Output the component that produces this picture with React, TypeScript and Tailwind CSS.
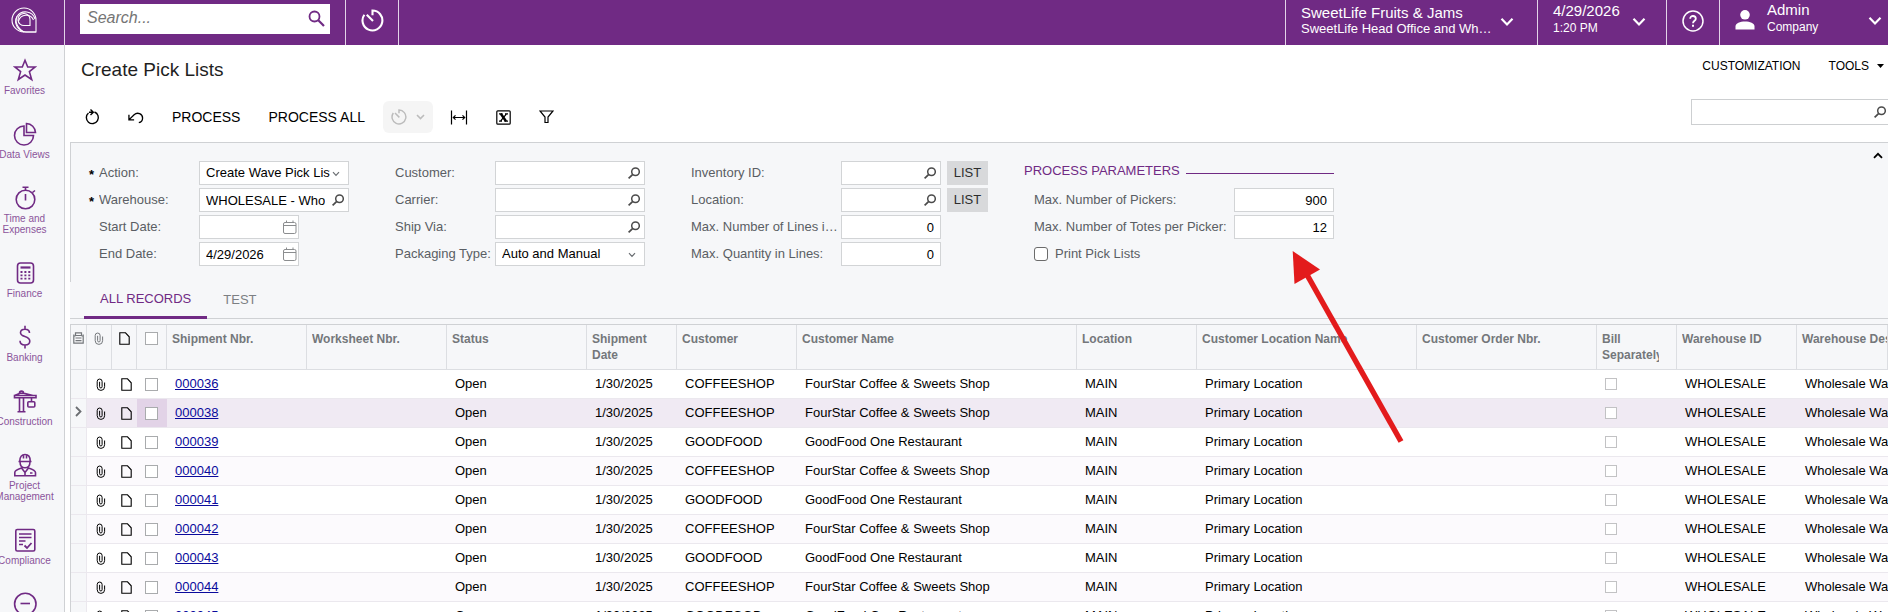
import React from 'react';
import clsx from 'clsx';

type IconProps = { className?: string };

const Svg: React.FC<React.SVGProps<SVGSVGElement>> = ({ children, ...rest }) => (
    <svg fill="none" stroke="currentColor" strokeWidth="1.5" aria-hidden="true" {...rest}>
        {children}
    </svg>
);

const LookupIcon = ({ className }: IconProps) => (
    <Svg className={className} width="12" height="12" viewBox="0 0 12 12">
        <circle cx="7.5" cy="4.7" r="3.8" />
        <path d="M4.8 7.4 0.6 11.4" strokeWidth="1.7" />
    </Svg>
);

const CalendarIcon = ({ className }: IconProps) => (
    <Svg className={className} width="14" height="14" viewBox="0 0 14 14" strokeWidth="1">
        <rect x="0.5" y="2.5" width="12.5" height="11" rx="1.5" />
        <path d="M0.5 5.5H13M3.5 0.5V3M10 0.5V3" />
    </Svg>
);

const SmallChevron = ({ className }: IconProps) => (
    <Svg className={className} width="8" height="6" viewBox="0 0 8 6" strokeWidth="1.2">
        <path d="M1 1.2 4 4.4 7 1.2" />
    </Svg>
);

const HeaderChevron = ({ className }: IconProps) => (
    <Svg className={className} width="14" height="10" viewBox="0 0 14 10" strokeWidth="2.2">
        <path d="M1.5 1.8 7 7.4 12.5 1.8" />
    </Svg>
);

const TimerIcon = ({ size, width = 2 }: { size: number; width?: number }) => (
    <Svg width={size} height={size} viewBox="0 0 22 22" strokeWidth={width}>
        <path d="M11 6V1.5A9.5 9.5 0 1 1 3.2 5.5" />
        <path d="M5.5 5.5 11.5 11.5" />
    </Svg>
);

const ClipIcon = () => (
    <Svg width="10" height="13" viewBox="0 0 10 13" strokeWidth="1">
        <path d="M1.2 3.5V8.7a3.7 3.7 0 0 0 7.4 0V4.5M1.2 3.5a2.4 2.4 0 0 1 4.9 0V8.7a1.2 1.2 0 0 1-2.5 0V3.8" />
    </Svg>
);

const NoteIcon = () => (
    <Svg width="11" height="13" viewBox="0 0 11 13" strokeWidth="1.1">
        <path d="M0.8 0.8H6.5L10.2 4.8V12.2H0.8Z" />
    </Svg>
);

const Logo = () => (
    <Svg width="26" height="26" viewBox="0 0 26 26" strokeWidth="1.1">
        <path d="M25 25H13A12 12 0 1 1 25 13Z" />
        <path d="M25 25H15A10.5 10.5 0 0 1 6 9.5 10 10 0 0 1 24 12" />
        <path d="M19 18.500H13.500A6 6 0 1 1 19 12.500Z" />
        <path d="M6 9.500C3.500 14 6 21 13 25M7.500 14a8 8 0 0 1 15-1" />
    </Svg>
);

const navItems: { lines: string[]; icon: React.ReactNode }[] = [
    {
        lines: ['Favorites'],
        icon: <path d="M12 2.300 14.700 9H22.200L16.400 13.600 18.700 21.500 12 17 5.300 21.500 7.600 13.600 1.800 9H9.300Z" />,
    },
    {
        lines: ['Data Views'],
        icon: (
            <>
                <path d="M11 4A9.500 9.500 0 1 0 20.500 13.500H11Z" />
                <path d="M13.500 1.500A9.500 9.500 0 0 1 22.500 10.500H13.500Z" />
            </>
        ),
    },
    {
        lines: ['Time and', 'Expenses'],
        icon: (
            <>
                <circle cx="12.500" cy="13.500" r="9.300" />
                <path d="M12.500 8V14.500M12.500 4V1.500M9.500 1.200H15.500M19.500 6.500 22 4.500" />
            </>
        ),
    },
    {
        lines: ['Finance'],
        icon: (
            <>
                <rect x="4.500" y="2" width="16" height="20" rx="3" />
                <path d="M7.500 6.500H17.500" strokeWidth="2.200" />
                <path d="M7.500 11H18M7.500 14.300H18M7.500 17.600H18" strokeWidth="1.800" strokeDasharray="2 1.900" />
            </>
        ),
    },
    {
        lines: ['Banking'],
        icon: (
            <path d="M16.500 8C16.500 5.500 14.500 4.200 12 4.200S7.500 5.500 7.500 7.700C7.500 12.500 16.800 10.500 16.800 16 16.800 18.500 14.800 20 12 20S7 18.500 7 15.800M12 0.800V4.200M12 20V23.500" />
        ),
    },
    {
        lines: ['Construction'],
        icon: (
            <>
                <path d="M1.500 6.500H23V8.800H1.500ZM1.500 6.500 7 4.200H11L20 6.500M6.500 4C6.500 1.500 10.500 1.500 10.500 4" />
                <path d="M6.500 9V22.500M10.500 9V22.500M4.500 22.800H12.500M18.500 9V12.500" />
                <rect x="14.800" y="12.800" width="7" height="5.200" rx="1" />
            </>
        ),
    },
    {
        lines: ['Project', 'Management'],
        icon: (
            <>
                <path d="M5.500 8.500H18.500M6.800 8C6.800 4 8.800 1.500 12 1.500S17.200 4 17.200 8M10.500 2V5.500M13.500 2V5.500" />
                <path d="M7 8.500C7 12.500 9.200 14.800 12 14.800S17 12.500 17 8.500" />
                <path d="M1.800 22.800V19.500C1.800 17.500 4 16.500 8.500 15L12 19.500 15.500 15C20 16.500 22.500 17.500 22.500 19.500V22.800ZM12 19.500V22.500M17 20H19.500" />
            </>
        ),
    },
    {
        lines: ['Compliance'],
        icon: (
            <>
                <rect x="2.800" y="1.500" width="19" height="21.500" rx="1.500" />
                <path d="M6 6H18.500M6 9.500H18.500M6 13H12.500M6 16.500H10" />
                <path d="M11.500 17.500 14 20 18.500 15" strokeWidth="1.800" />
            </>
        ),
    },
    {
        lines: ['More Items'],
        icon: (
            <>
                <circle cx="12.300" cy="12" r="10.700" />
                <path d="M7.500 11.500H17" />
            </>
        ),
    },
];

const control = 'h-6 border border-[#d2d4d6] bg-white text-[13px] text-black outline-none';

interface FieldProps {
    id: string;
    label: string;
    labelWidth: string;
    width?: string;
    value?: string;
    kind?: 'lookup' | 'date' | 'select' | 'number';
    required?: boolean;
    children?: React.ReactNode;
}

const Field = ({ id, label, labelWidth, width = 'w-[150px]', value = '', kind = 'lookup', required, children }: FieldProps) => (
    <div className="flex h-6 items-center">
        {required !== undefined && <span className="w-[10px] pt-1 text-[13px] font-bold text-black">{required ? '*' : ''}</span>}
        <label htmlFor={id} className={clsx('shrink-0 truncate text-[13px] text-[#5a5e64]', labelWidth)}>
            {label}
        </label>
        <div className={clsx('relative', width)}>
            {kind === 'select' ? (
                <select id={id} className={clsx(control, 'block w-full appearance-none pr-[18px] pl-[6px]')}>
                    <option>{value}</option>
                </select>
            ) : (
                <input
                    id={id}
                    type="text"
                    defaultValue={value}
                    className={clsx(control, 'block w-full pl-[6px]', kind === 'number' ? 'pr-[6px] text-right' : 'pr-[23px]')}
                />
            )}
            {kind === 'select' && <SmallChevron className="pointer-events-none absolute top-[10px] right-[9px] text-[#6b6f73]" />}
            {kind === 'lookup' && <LookupIcon className="pointer-events-none absolute top-[6px] right-[5px] text-[#4b4b4b]" />}
            {kind === 'date' && <CalendarIcon className="pointer-events-none absolute top-[5px] right-[2px] text-[#8b8d8f]" />}
        </div>
        {children}
    </div>
);

const ListButton = () => (
    <button className="ml-[6px] h-6 w-[41px] bg-[#d8d9db] text-[13px] text-[#2d2d2d]">LIST</button>
);

const columns: { title: string; width: string }[] = [
    { title: 'Shipment Nbr.', width: 'w-[140px]' },
    { title: 'Worksheet Nbr.', width: 'w-[140px]' },
    { title: 'Status', width: 'w-[140px]' },
    { title: 'Shipment Date', width: 'w-[90px]' },
    { title: 'Customer', width: 'w-[120px]' },
    { title: 'Customer Name', width: 'w-[280px]' },
    { title: 'Location', width: 'w-[120px]' },
    { title: 'Customer Location Name', width: 'w-[220px]' },
    { title: 'Customer Order Nbr.', width: 'w-[180px]' },
    { title: 'Bill Separately', width: 'w-[80px]' },
    { title: 'Warehouse ID', width: 'w-[120px]' },
];

const customers: Record<string, string> = {
    COFFEESHOP: 'FourStar Coffee & Sweets Shop',
    GOODFOOD: 'GoodFood One Restaurant',
};

const shipments = [
    { nbr: '000036', customer: 'COFFEESHOP' },
    { nbr: '000038', customer: 'COFFEESHOP' },
    { nbr: '000039', customer: 'GOODFOOD' },
    { nbr: '000040', customer: 'COFFEESHOP' },
    { nbr: '000041', customer: 'GOODFOOD' },
    { nbr: '000042', customer: 'COFFEESHOP' },
    { nbr: '000043', customer: 'GOODFOOD' },
    { nbr: '000044', customer: 'COFFEESHOP' },
    { nbr: '000045', customer: 'GOODFOOD' },
];

const selected = '000038';

const th = 'h-[45px] border-b border-r border-[#dcdee2] p-0 align-top';
const box = 'block appearance-none border bg-white';

const Header = () => (
    <header className="flex h-[45px] shrink-0 bg-[#702a84] text-white">
        <a href="#home" aria-label="Home" className="flex w-[65px] items-start border-r border-[#e3d3e8] pt-[7px] pl-[11px]">
            <Logo />
        </a>
        <div className="flex w-[281px] items-start border-r border-[#e3d3e8] pt-1 pl-[15px]">
            <div className="relative h-[30px] w-[250px] bg-white">
                <input
                    type="text"
                    aria-label="Search"
                    placeholder="Search..."
                    className="h-[28px] w-full bg-transparent pl-[7px] text-base text-black italic outline-none placeholder:text-[#757575]"
                />
                <Svg className="pointer-events-none absolute top-[6px] right-[5px] text-[#702a84]" width="17" height="17" viewBox="0 0 17 17" strokeWidth="1.800">
                    <circle cx="6.500" cy="6.500" r="5" />
                    <path d="M10.300 10.300 16 16" strokeWidth="2.200" />
                </Svg>
            </div>
        </div>
        <button aria-label="Recent" className="flex w-[53px] items-start justify-center border-r border-[#e3d3e8] pt-[9px]">
            <TimerIcon size={23} />
        </button>
        <div className="ml-auto flex">
            <button className="flex w-[252px] items-start border-l border-[#e3d3e8] pl-[15px] text-left">
                <span className="w-[195px] pt-1">
                    <span className="block truncate text-[15px] leading-[17px]">SweetLife Fruits &amp; Jams</span>
                    <span className="block truncate text-[13px] leading-[15px]">SweetLife Head Office and Wholesale Center</span>
                </span>
                <HeaderChevron className="mt-[17px] ml-1" />
            </button>
            <button className="flex w-[129px] items-start border-l border-[#e3d3e8] pl-[15px] text-left">
                <span className="w-[71px] pt-[2px]">
                    <span className="block text-[15px] leading-[18px]">4/29/2026</span>
                    <span className="block text-xs leading-[17px]">1:20 PM</span>
                </span>
                <HeaderChevron className="mt-[17px] ml-2" />
            </button>
            <button aria-label="Help" className="flex w-[53px] items-start justify-center border-l border-[#e3d3e8] pt-[10px]">
                <Svg width="22" height="22" viewBox="0 0 22 22" strokeWidth="1.500">
                    <circle cx="11" cy="11" r="10" />
                    <path d="M8.200 8.800C8.200 5 13.800 5.200 13.800 8.700 13.800 10.800 11 10.800 11 13.300" strokeWidth="1.800" />
                    <path d="M11 14.800V16.800" strokeWidth="2" />
                </Svg>
            </button>
            <button className="flex w-[169px] items-start border-l border-[#e3d3e8] pl-[15px] text-left">
                <svg className="mt-[10px]" width="20" height="20" viewBox="0 0 20 20" fill="currentColor" aria-hidden="true">
                    <circle cx="10" cy="4.800" r="4.800" />
                    <path d="M0.500 19.500V16.500C0.500 13 5 11.500 10 11.500S19.500 13 19.500 16.500V19.500Z" />
                </svg>
                <span className="ml-3 w-[93px] pt-[1px]">
                    <span className="block text-[15px] leading-[18px]">Admin</span>
                    <span className="block text-xs leading-[17px]">Company</span>
                </span>
                <HeaderChevron className="mt-[16px] ml-2" />
            </button>
        </div>
    </header>
);

const Sidebar = () => (
    <nav className="w-[65px] shrink-0 border-r border-[#cfd1d4] bg-[#f6f7f9] pt-[13px]">
        <ul className="flex w-[49px] flex-col gap-[26px]">
            {navItems.map(item => (
                <li key={item.lines[0]}>
                    <a href="#nav" className="flex flex-col items-center text-[#702a84]">
                        <Svg width="24" height="24" viewBox="0 0 24 24" strokeWidth="1.600">
                            {item.icon}
                        </Svg>
                        <span className="flex flex-col items-center pt-[3px] text-[10px] leading-[11px] whitespace-nowrap opacity-80">
                            {item.lines.map(line => (
                                <span key={line}>{line}</span>
                            ))}
                        </span>
                    </a>
                </li>
            ))}
        </ul>
    </nav>
);

const TitleBar = () => (
    <div className="flex h-[50px] items-center justify-between pl-4">
        <h1 className="text-[19px] text-[#1f1f1f]">Create Pick Lists</h1>
        <div className="flex h-[42px] items-center self-start text-xs text-black">
            <button>CUSTOMIZATION</button>
            <button className="ml-7 flex items-center pr-1">
                TOOLS
                <svg className="ml-2" width="7" height="4" viewBox="0 0 7 4" aria-hidden="true">
                    <path d="M0 0H7L3.500 4Z" />
                </svg>
            </button>
        </div>
    </div>
);

const Toolbar = () => (
    <div className="flex h-[47px] items-start text-sm text-black">
        <div className="flex h-[44px] items-center">
            <button aria-label="Refresh" className="ml-5">
                <Svg width="15" height="16" viewBox="0 0 15 16" strokeWidth="1.400">
                    <path d="M3.500 4A6 6 0 1 0 9.500 3M4 3.300H8.200M5.500 0.600 8.300 3.300 5.500 6" />
                </Svg>
            </button>
            <button aria-label="Cancel" className="ml-7">
                <Svg width="16" height="13" viewBox="0 0 17 13" strokeWidth="1.400">
                    <path d="M1 3.500V9H6.500M1.500 8.500 6.500 3.500C10 0.500 15.500 2.500 15.500 7 15.500 9.500 14 11.500 11.500 12" />
                </Svg>
            </button>
            <button className="ml-7">PROCESS</button>
            <button className="ml-7">PROCESS ALL</button>
            <button aria-label="Schedule" disabled className="ml-[18px] flex h-8 w-[50px] items-center justify-center gap-[9px] rounded-md bg-[#f5f5f5] text-[#bcbcbc]">
                <TimerIcon size={16} />
                <Svg width="9" height="6" viewBox="0 0 9 6" strokeWidth="1.600">
                    <path d="M1 1 4.500 4.500 8 1" />
                </Svg>
            </button>
            <button aria-label="Fit to screen" className="ml-[17px]">
                <Svg width="18" height="15" viewBox="0 0 18 15" strokeWidth="1.200">
                    <path d="M1.500 0.500V14.500M16.500 0.500V14.500M3 7.500H15M5.500 5.300 3.300 7.500 5.500 9.700M12.500 5.300 14.700 7.500 12.500 9.700" />
                </Svg>
            </button>
            <button aria-label="Export to Excel" className="ml-7">
                <Svg width="15" height="15" viewBox="0 0 15 15" strokeWidth="1.200">
                    <rect x="0.800" y="0.800" width="13.400" height="13.400" rx="1" />
                    <path d="M4.800 3.800 10 11.200" strokeWidth="2.400" />
                    <path d="M10.500 3.800 4.500 11.200M3 3.800H6.500M9 3.800H12M3 11.200H6M8.500 11.200H12" />
                </Svg>
            </button>
            <button aria-label="Filter" className="ml-7">
                <Svg width="15" height="14" viewBox="0 0 15 14" strokeWidth="1.200">
                    <path d="M1 1H14L9 7V12.500H6V7Z" />
                </Svg>
            </button>
        </div>
        <div className="relative mt-1 ml-auto w-[197px]">
            <input type="text" aria-label="Filter records" className="block h-[26px] w-full border border-r-0 border-[#cdcfd1] bg-white pr-5 pl-2 text-[13px] outline-none" />
            <LookupIcon className="pointer-events-none absolute top-[7px] right-[2px] text-[#4b4b4b]" />
        </div>
    </div>
);

const FilterPanel = () => (
    <section className="flex border-t border-l border-[#cfd1d4] pt-[18px] pb-4 pl-[18px]">
        <div className="flex flex-col gap-[3px]">
            <Field id="action" label="Action:" labelWidth="w-[100px]" kind="select" value="Create Wave Pick Lists" required />
            <Field id="warehouse" label="Warehouse:" labelWidth="w-[100px]" value="WHOLESALE - Wholesale Warehouse" required />
            <Field id="start" label="Start Date:" labelWidth="w-[100px]" width="w-[100px]" kind="date" required={false} />
            <Field id="end" label="End Date:" labelWidth="w-[100px]" width="w-[100px]" kind="date" value="4/29/2026" required={false} />
        </div>
        <div className="ml-[46px] flex flex-col gap-[3px]">
            <Field id="customer" label="Customer:" labelWidth="w-[100px]" />
            <Field id="carrier" label="Carrier:" labelWidth="w-[100px]" />
            <Field id="shipvia" label="Ship Via:" labelWidth="w-[100px]" />
            <Field id="packaging" label="Packaging Type:" labelWidth="w-[100px]" kind="select" value="Auto and Manual" />
        </div>
        <div className="ml-[46px] flex flex-col gap-[3px]">
            <Field id="inventory" label="Inventory ID:" labelWidth="w-[150px]" width="w-[100px]">
                <ListButton />
            </Field>
            <Field id="location" label="Location:" labelWidth="w-[150px]" width="w-[100px]">
                <ListButton />
            </Field>
            <Field id="maxlines" label="Max. Number of Lines in Shipment:" labelWidth="w-[150px]" width="w-[100px]" kind="number" value="0" />
            <Field id="maxqty" label="Max. Quantity in Lines:" labelWidth="w-[150px]" width="w-[100px]" kind="number" value="0" />
        </div>
        <div className="ml-9 flex flex-col gap-[3px]">
            <div className="flex h-6 items-center gap-[6px]">
                <h2 className="pb-1 text-[13px] text-[#702a84]">PROCESS PARAMETERS</h2>
                <span className="h-px flex-1 bg-[#702a84]" />
            </div>
            <div className="flex flex-col gap-[3px] pl-[10px]">
                <Field id="pickers" label="Max. Number of Pickers:" labelWidth="w-[200px]" width="w-[100px]" kind="number" value="900" />
                <Field id="totes" label="Max. Number of Totes per Picker:" labelWidth="w-[200px]" width="w-[100px]" kind="number" value="12" />
                <label className="flex h-6 items-center gap-[7px] text-[13px] text-[#5a5e64]">
                    <input type="checkbox" className="size-[14px] appearance-none rounded-[3px] border border-[#6b6b6b] bg-white" />
                    Print Pick Lists
                </label>
            </div>
        </div>
        <button aria-label="Collapse" className="mr-[5px] ml-auto self-start -mt-[9px]">
            <Svg width="10" height="7" viewBox="0 0 10 7" strokeWidth="1.800">
                <path d="M1 5.800 5 1.800 9 5.800" />
            </Svg>
        </button>
    </section>
);

const Tabs = () => (
    <div className="flex h-[37px] border-b border-[#cfd1d4] pl-[14px] text-[13px]">
        <button className="-mb-px border-b-[3px] border-[#702a84] px-4 text-[#702a84]">ALL RECORDS</button>
        <button className="px-4 text-[#7c7f83]">TEST</button>
    </div>
);

const Grid = () => (
    <div className="mt-[5px] border-t border-l border-[#cfd1d4]">
        <table className="w-full table-fixed border-separate border-spacing-0 text-left text-[13px] text-black">
            <thead className="text-xs leading-4 text-[#74777b]">
                <tr>
                    <th className={clsx(th, 'w-[16px]')}>
                        <Svg className="mt-[7px] ml-[2px]" width="11" height="12" viewBox="0 0 11 12" strokeWidth="1.200">
                            <path d="M0.800 2.500V11.200H10.200V2.500M2.500 0.800H8.500V3.500H2.500ZM2.500 6H8.500M2.500 8.600H8.500M0.800 4H2.500M8.500 4H10.200" />
                        </Svg>
                    </th>
                    <th className={clsx(th, 'w-[25px]')}>
                        <span className="flex justify-center pt-[7px]"><ClipIcon /></span>
                    </th>
                    <th className={clsx(th, 'w-[25px] text-black')}>
                        <span className="flex justify-center pt-[7px]"><NoteIcon /></span>
                    </th>
                    <th className={clsx(th, 'w-[30px]')}>
                        <input type="checkbox" aria-label="Select all" className={clsx(box, 'mt-[7px] ml-2 size-[13px] border-[#a9abad]')} />
                    </th>
                    {columns.map(col => (
                        <th key={col.title} className={clsx(th, col.width)}>
                            <div className="mr-[17px] ml-[5px] overflow-hidden pt-[6px]">{col.title}</div>
                        </th>
                    ))}
                    <th className={clsx(th, 'overflow-hidden whitespace-nowrap')}>
                        <div className="ml-[5px] pt-[6px]">Warehouse Description</div>
                    </th>
                </tr>
            </thead>
            <tbody>
                {shipments.map(({ nbr, customer }) => (
                    <tr
                        key={nbr}
                        className={clsx(
                            '*:h-[29px] *:border-b *:border-[#ebe8ee] *:p-0',
                            nbr === selected ? 'bg-[#f0eaf3]' : 'bg-white even:bg-[#fcfafd]'
                        )}
                    >
                        <td className="border-r bg-[#f6f7f9]">
                            {nbr === selected && (
                                <Svg className="mb-1 ml-1 text-[#6b6e72]" width="7" height="11" viewBox="0 0 7 11" strokeWidth="1.800">
                                    <path d="M1 1 5.500 5.500 1 10" />
                                </Svg>
                            )}
                        </td>
                        <td><span className="block pl-[9px]"><ClipIcon /></span></td>
                        <td><span className="block pl-[9px]"><NoteIcon /></span></td>
                        <td className={clsx(nbr === selected && 'bg-[#e2d3e7]')}>
                            <input type="checkbox" aria-label={nbr} className={clsx(box, 'ml-2 size-[13px] border-[#a9abad]')} />
                        </td>
                        <td><a href="#shipment" className="pl-2 text-[#0a0a9c]"><span className="underline">{nbr}</span></a></td>
                        <td />
                        <td><span className="pl-2">Open</span></td>
                        <td><span className="pl-2">1/30/2025</span></td>
                        <td><span className="pl-2">{customer}</span></td>
                        <td><span className="pl-2">{customers[customer]}</span></td>
                        <td><span className="pl-2">MAIN</span></td>
                        <td><span className="pl-2">Primary Location</span></td>
                        <td />
                        <td>
                            <input type="checkbox" disabled aria-label="Bill separately" className={clsx(box, 'ml-2 size-3 border-[#c2c2c4]')} />
                        </td>
                        <td><span className="pl-2">WHOLESALE</span></td>
                        <td className="overflow-hidden whitespace-nowrap"><span className="pl-2">Wholesale Warehouse</span></td>
                    </tr>
                ))}
            </tbody>
        </table>
    </div>
);

// Callout arrow pointing at the picker limits
const Arrow = () => (
    <svg className="pointer-events-none absolute top-[250px] left-[1290px]" width="116" height="196" viewBox="1290 250 116 196" aria-hidden="true">
        <path d="M1306 273 1401 441.500" stroke="#e31b1c" strokeWidth="5.500" />
        <path d="M1292.700 251 1320 269.500 1294.500 284Z" fill="#e31b1c" />
    </svg>
);

export default function App() {
    return (
        <div className="relative flex h-screen flex-col overflow-hidden bg-white font-['Liberation_Sans',Arial,sans-serif]">
            <Header />
            <div className="flex min-h-0 flex-1">
                <Sidebar />
                <main className="min-w-0 flex-1">
                    <TitleBar />
                    <Toolbar />
                    <div className="ml-[5px] bg-[#f6f7f9]">
                        <FilterPanel />
                        <Tabs />
                        <Grid />
                    </div>
                </main>
            </div>
            <Arrow />
        </div>
    );
}
